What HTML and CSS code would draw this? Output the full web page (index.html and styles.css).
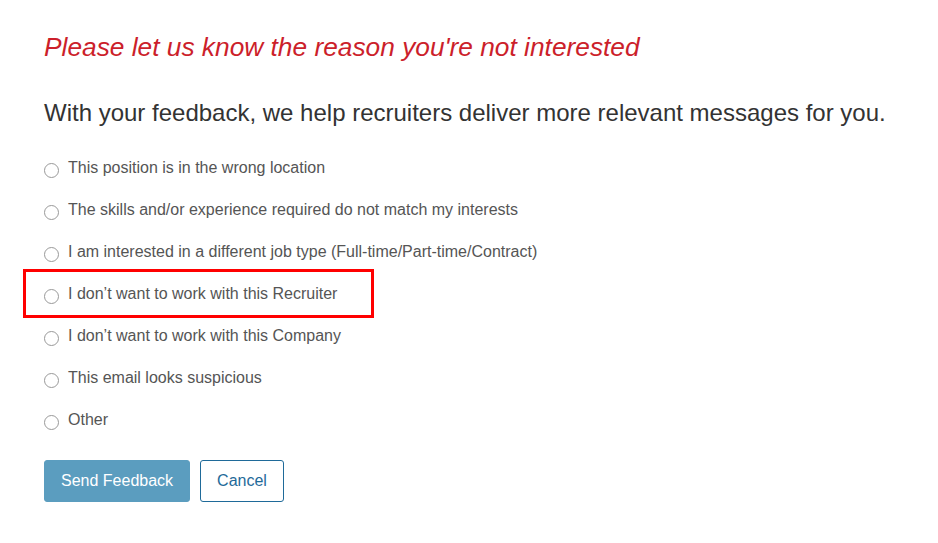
FILE: index.html
```html
<!DOCTYPE html>
<html>
	<head>
		<meta charset="UTF-8">
		<title>Feedback</title>
		<link rel="stylesheet" href="styles.css">
	</head>
	<body>
		<div class="feedback">
			<h1 class="title">Please let us know the reason you're not interested</h1>
			<p class="lead">With your feedback, we help recruiters deliver more relevant messages for you.</p>
			<ul class="reasons">
				<li><label><span class="radio"></span>This position is in the wrong location</label></li>
				<li><label><span class="radio"></span>The skills and/or experience required do not match my interests</label></li>
				<li><label><span class="radio"></span>I am interested in a different job type (Full-time/Part-time/Contract)</label></li>
				<li class="marked"><label><span class="radio"></span>I don’t want to work with this Recruiter</label></li>
				<li><label><span class="radio"></span>I don’t want to work with this Company</label></li>
				<li><label><span class="radio"></span>This email looks suspicious</label></li>
				<li><label><span class="radio"></span>Other</label></li>
			</ul>
			<div class="actions">
				<button class="btn send">Send Feedback</button>
				<button class="btn cancel">Cancel</button>
			</div>
		</div>
	</body>
</html>
```

FILE: styles.css
```css
body{
	margin: 0;
	background: #fff;
	font-family: "Liberation Sans", Arial, sans-serif;
}
.feedback{
	padding: 30px 0 0 44px;
}
.title{
	margin: 0;
	font-size: 26.3px;
	font-weight: normal;
	font-style: italic;
	color: #cc1f2b;
	line-height: 34px;
}
.lead{
	margin: 35px 0 0;
	font-size: 24px;
	color: #333;
	line-height: 28px;
}
.reasons{
	margin: 20px 0 0;
	padding: 0;
	list-style: none;
}
.reasons li{
	height: 42px;
	display: flex;
	align-items: center;
}
.reasons label{
	display: flex;
	align-items: center;
	font-size: 16px;
	color: #555;
}
.radio{
	width: 15px;
	height: 15px;
	border: 1px solid #999;
	border-radius: 50%;
	margin: 4px 9px 0 0;
	box-sizing: border-box;
}
.marked{
	position: relative;
}
.marked::before{
	content: "";
	position: absolute;
	left: -21px;
	top: -4px;
	width: 351px;
	height: 49px;
	border: 3px solid #f00;
	box-sizing: border-box;
}
.actions{
	margin-top: 19px;
	display: flex;
	gap: 10px;
}
.btn{
	height: 42px;
	padding: 0 16px;
	font-family: "Liberation Sans", Arial, sans-serif;
	font-size: 16px;
	border-radius: 3px;
	cursor: pointer;
}
.send{
	background: #5b9dbf;
	color: #fff;
	border: 1px solid #5b9dbf;
}
.cancel{
	background: #fff;
	color: #1f6a99;
	border: 1px solid #1f6a99;
}
```
